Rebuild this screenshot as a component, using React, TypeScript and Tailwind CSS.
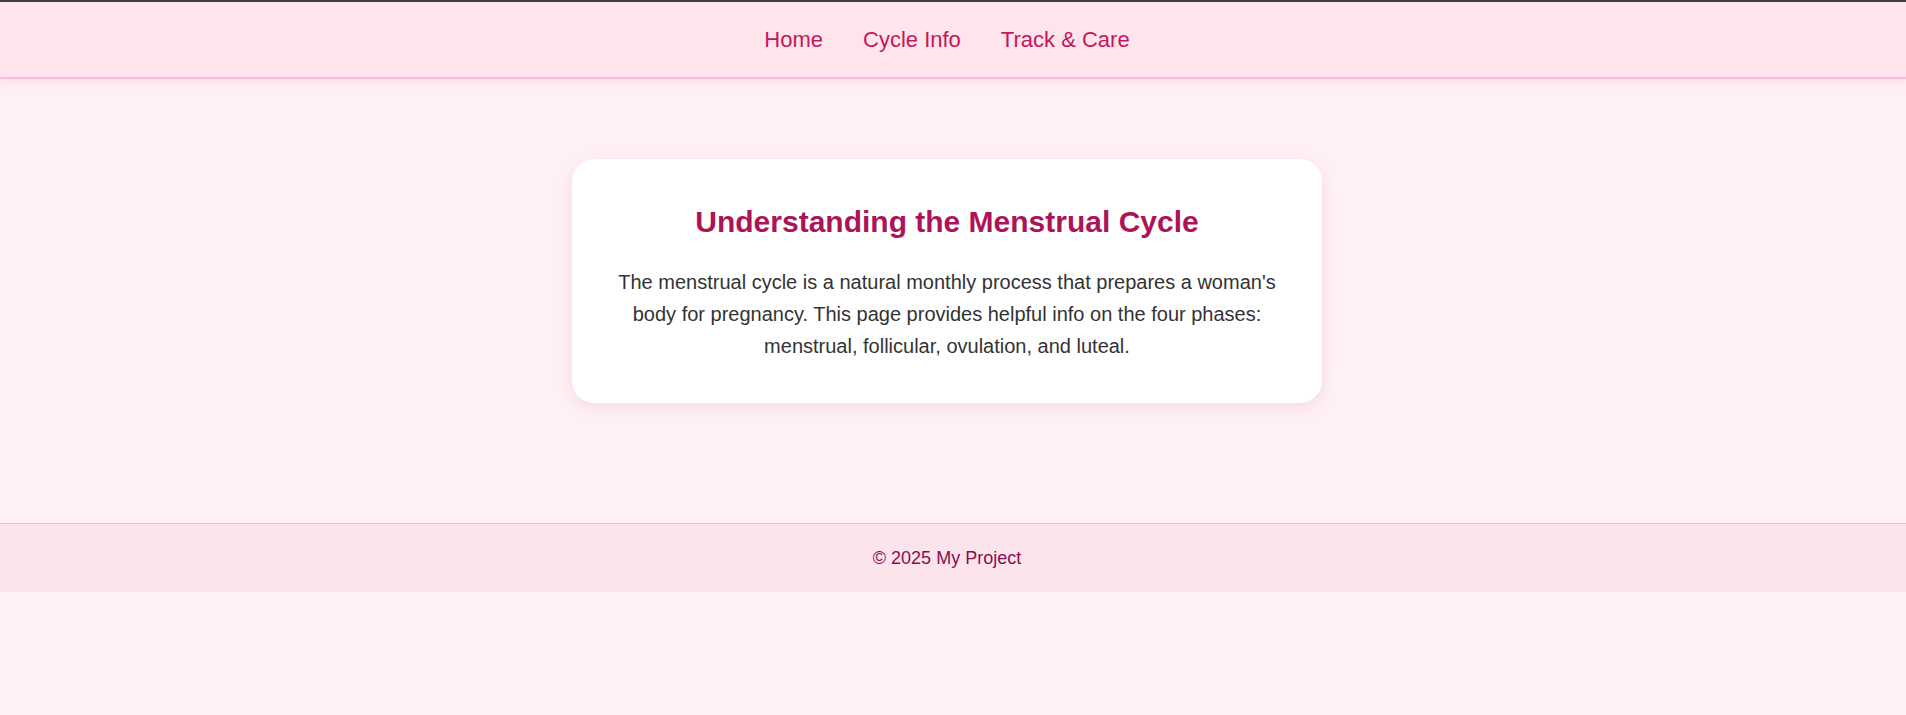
export default function App() {
    const links = ['Home', 'Cycle Info', 'Track & Care'];

    return (
        <div className="min-h-screen bg-[#fff0f5] font-['Liberation_Sans',Arial,sans-serif]">
            <header className="border-t-2 border-t-[#3c3c44] border-b-2 border-b-[#fbbbe0] bg-[#ffe4ec] shadow-[0_3px_8px_rgba(240,160,190,0.25)]">
                <nav className="flex h-[75px] items-center justify-center gap-[40px] pr-[12px]">
                    {links.map((l) => (
                        <a key={l} href="#" className="text-[22px] text-[#c2185b]">{l}</a>
                    ))}
                </nav>
            </header>

            <main className="flex justify-center pl-5 pr-[32px] pt-[80px] pb-[120px]">
                <div className="w-[750px] rounded-[22px] bg-white px-10 pt-[45px] pb-[41px] text-center shadow-[0_4px_14px_rgba(200,120,150,0.18)]">
                    <h2 className="mb-[26px] text-[30px] font-bold leading-[36px] text-[#ad1457]">
                        Understanding the Menstrual Cycle
                    </h2>
                    <p className="text-[20px] leading-[32px] text-[#333]">
                        The menstrual cycle is a natural monthly process that prepares a woman's body for pregnancy.
                        This page provides helpful info on the four phases: menstrual, follicular, ovulation, and luteal.
                    </p>
                </div>
            </main>

            <footer className="flex h-[69px] items-center justify-center border-t border-[#f6b8c8] bg-[#fce4ec] pr-[12px] text-[18px] text-[#880e4f]">
                © 2025 My Project
            </footer>
        </div>
    );
}
